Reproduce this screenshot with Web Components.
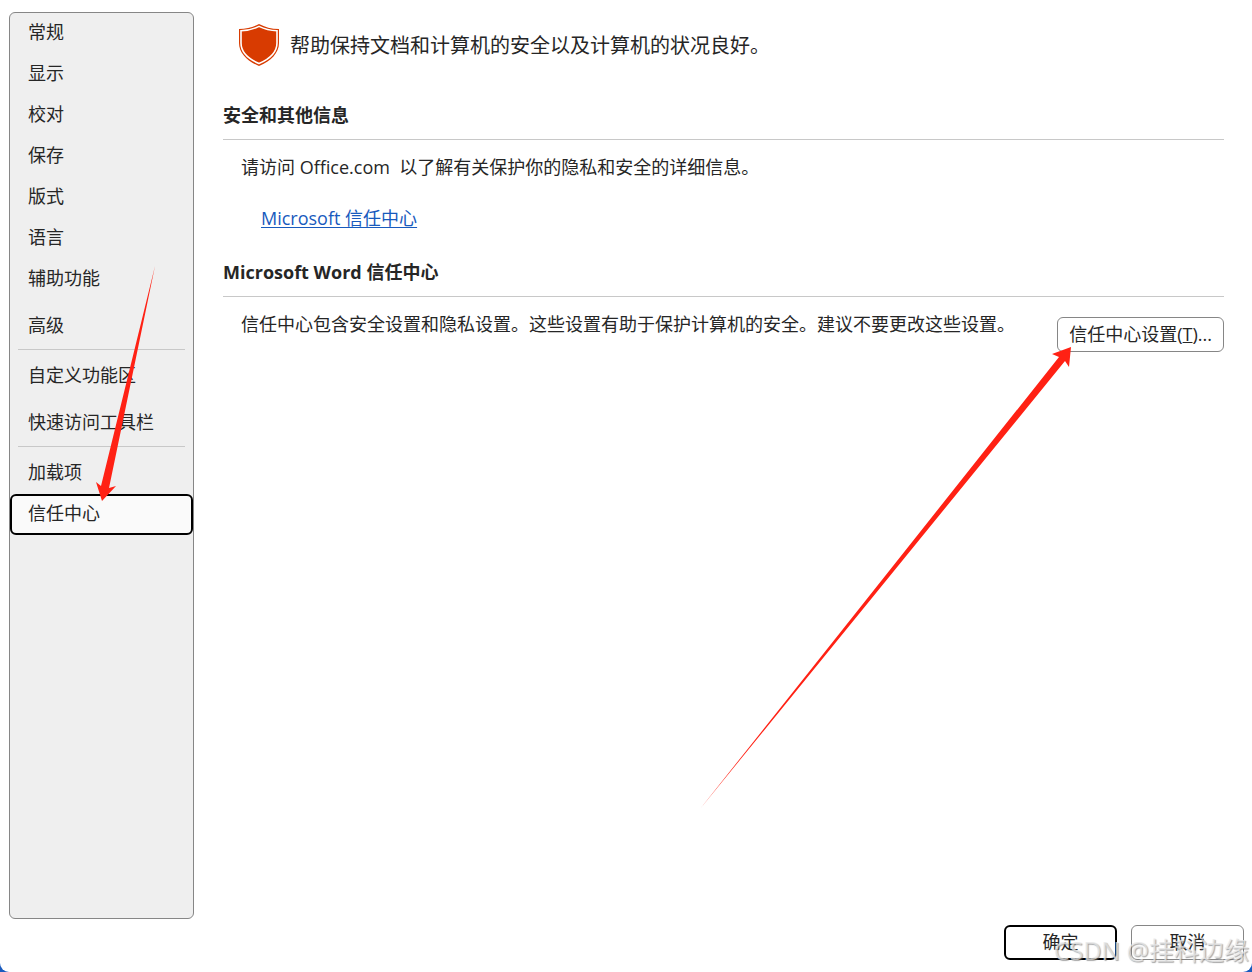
<!DOCTYPE html>
<html lang="zh-CN">
<head>
<meta charset="utf-8">
<title>Word 选项</title>
<style>
html {
  background: #1a5bbe;
}
body {
  margin: 0;
  color: #262626;
  font: 18px/24px "Open Sans", "Noto Sans CJK SC", sans-serif;
}
</style>
</head>
<body>
<options-dialog>
  <options-nav slot="nav">
    <nav-item>常规</nav-item>
    <nav-item>显示</nav-item>
    <nav-item>校对</nav-item>
    <nav-item>保存</nav-item>
    <nav-item>版式</nav-item>
    <nav-item>语言</nav-item>
    <nav-item>辅助功能</nav-item>
    <nav-item spaced>高级</nav-item>
    <nav-line></nav-line>
    <nav-item>自定义功能区</nav-item>
    <nav-item spaced>快速访问工具栏</nav-item>
    <nav-line></nav-line>
    <nav-item>加载项</nav-item>
    <nav-item selected>信任中心</nav-item>
  </options-nav>

  <page-banner>帮助保持文档和计算机的安全以及计算机的状况良好。</page-banner>
  <page-section heading="安全和其他信息">
    请访问 Office.com&nbsp; 以了解有关保护你的隐私和安全的详细信息。
    <text-link slot="link" href="#trust">Microsoft 信任中心</text-link>
  </page-section>
  <page-section heading="Microsoft Word 信任中心">
    信任中心包含安全设置和隐私设置。这些设置有助于保护计算机的安全。建议不要更改这些设置。
    <push-button slot="action">信任中心设置(<u>T</u>)...</push-button>
  </page-section>

  <push-button slot="footer" primary>确定</push-button>
  <push-button slot="footer" wide>取消</push-button>
</options-dialog>
<arrow-marks></arrow-marks>
<water-mark>CSDN @挂科边缘</water-mark>

<script>
function define (name, html, setup) {
  const template = document.createElement('template')
  template.innerHTML = html
  window.customElements.define(name, class extends HTMLElement {
    constructor () {
      super()
      this.attachShadow({ mode: 'open' })
      this.shadowRoot.appendChild(template.content.cloneNode(true))
    }

    connectedCallback () {
      if (setup) setup(this, this.shadowRoot)
    }
  })
}

define('options-dialog', /* HTML */
`
<style>
:host {
  box-sizing: border-box;
  display: grid;
  grid-template: 1fr auto / 185px minmax(0, 1fr);
  gap: 6px 29px;
  min-height: 100vh;
  padding: 12px 8px 12px 9px;
  background: #fff;
  border-radius: 0 0 9px 9px;
}
main {
  padding: 12px 20px 0 0;
}
footer {
  grid-column: 1 / -1;
  display: flex;
  justify-content: flex-end;
  gap: 14px;
}
</style>
<slot name="nav"></slot>
<main><slot></slot></main>
<footer><slot name="footer"></slot></footer>
`)

define('options-nav', /* HTML */
`
<style>
:host {
  display: block;
  background: #efefef;
  border: 1px solid #868686;
  border-radius: 6px;
}
nav {
  display: flex;
  flex-direction: column;
}
</style>
<nav><slot></slot></nav>
`)

define('nav-item', /* HTML */
`
<style>
:host {
  display: block;
}
:host([spaced]) {
  margin-top: 6px;
}
button {
  display: block;
  box-sizing: border-box;
  width: 100%;
  height: 41px;
  padding: 0 16px 3px;
  border: 2px solid transparent;
  border-radius: 6px;
  background: none;
  color: inherit;
  font: inherit;
  text-align: left;
}
:host([selected]) button {
  background: #fafafa;
  border-color: #000;
}
</style>
<button type="button"><slot></slot></button>
`)

define('nav-line', /* HTML */
`
<style>
:host {
  display: block;
  height: 1px;
  margin: 2px 8px 6px;
  background: #c8c8c8;
}
</style>
`)

define('page-banner', /* HTML */
`
<style>
:host {
  display: flex;
  align-items: center;
  gap: 11px;
  padding: 0 0 7px 16px;
  font-size: 20px;
}
svg {
  flex: none;
}
span {
  padding-top: 2px;
}
</style>
<svg width="40" height="42" viewBox="0 0 40 42" aria-hidden="true">
  <path fill="#d83b01" d="M20 0C14 3 8 5 0 5V19C0 29 8 37 20 42C32 37 40 29 40 19V5C32 5 26 3 20 0Z"/>
  <path fill="none" stroke="#fff" stroke-width="1.6" d="M20 2.4C14 5.4 8.500 6.600 2 6.800V19C2 28 9.500 35 20 39.600C30.500 35 38 28 38 19V6.800C31.500 6.600 26 5.400 20 2.400Z"/>
</svg>
<span><slot></slot></span>
`)

define('page-section', /* HTML */
`
<style>
:host {
  display: block;
}
h2 {
  margin: 0;
  padding: 30px 0 12px;
  border-bottom: 1px solid #c8c8c8;
  font-size: 18px;
  line-height: 24px;
}
.row {
  display: flex;
  align-items: flex-start;
  justify-content: space-between;
  gap: 16px;
  padding-left: 18px;
}
p {
  margin: 0;
  padding-top: 15px;
}
slot[name="action"] {
  display: block;
  padding-top: 20px;
}
slot[name="link"] {
  display: block;
  padding-left: 38px;
}
</style>
<h2></h2>
<div class="row">
  <p><slot></slot></p>
  <slot name="action"></slot>
</div>
<slot name="link"></slot>
`, function (host, root) {
  root.querySelector('h2').textContent = host.getAttribute('heading')
})

define('text-link', /* HTML */
`
<style>
:host {
  display: block;
  padding-top: 27px;
}
a {
  color: #185abd;
  text-decoration: underline;
  text-underline-offset: 2px;
}
</style>
<a><slot></slot></a>
`, function (host, root) {
  root.querySelector('a').href = host.getAttribute('href')
})

define('push-button', /* HTML */
`
<style>
:host {
  display: block;
}
button {
  box-sizing: border-box;
  height: 35px;
  padding: 0 11px 2px;
  border: 1px solid #868686;
  border-radius: 6px;
  background: #fff;
  color: inherit;
  font: inherit;
  white-space: nowrap;
}
:host([primary]) button,
:host([wide]) button {
  width: 113px;
}
:host([primary]) button {
  border: 2px solid #000;
}
</style>
<button type="button"><slot></slot></button>
`)

// hand-drawn pointers lying over the dialog
define('arrow-marks', /* HTML */
`
<style>
:host {
  position: absolute;
  top: 0;
  left: 0;
  pointer-events: none;
}
svg {
  display: block;
}
</style>
<svg width="1252" height="972" viewBox="0 0 1252 972" fill="#ff2114" aria-hidden="true">
  <path d="M155 266L101 486L96 482L102 501L116 486L109 488Z"/>
  <path d="M700 809L1059 357L1052 354L1071 347L1069 367L1065 361Z"/>
</svg>
`)

define('water-mark', /* HTML */
`
<style>
:host {
  position: absolute;
  right: 3px;
  bottom: 4px;
  color: rgba(232, 232, 232, 0.75);
  font-size: 25px;
  line-height: 36px;
  text-shadow: 1px 1px 1px rgba(110, 110, 110, 0.6);
  pointer-events: none;
}
</style>
<slot></slot>
`)
</script>
</body>
</html>
